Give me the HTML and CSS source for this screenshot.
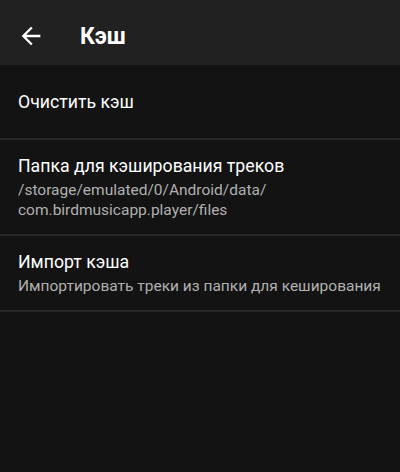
FILE: index.html
```html
<!DOCTYPE html>
<html lang="ru">

<head>
    <meta charset="UTF-8">
    <meta name="viewport" content="width=device-width, initial-scale=1.0">
    <title>Кэш</title>
    <link rel="stylesheet" href="styles.css">
</head>

<body>
    <div class="toolbar">
        <svg class="back-icon" width="28" height="28" viewBox="0 0 24 24">
            <path d="M20 11H7.83l5.59-5.59L12 4l-8 8 8 8 1.41-1.41L7.83 13H20v-2z" fill="#fff"/>
        </svg>
        <h1>Кэш</h1>
    </div>

    <div class="pref-list">
        <div class="pref-item">
            <div class="pref-title">Очистить кэш</div>
        </div>
        <div class="pref-item">
            <div class="pref-title">Папка для кэширования треков</div>
            <div class="pref-summary">/storage/emulated/0/Android/data/<br>com.birdmusicapp.player/files</div>
        </div>
        <div class="pref-item">
            <div class="pref-title">Импорт кэша</div>
            <div class="pref-summary">Импортировать треки из папки для кеширования</div>
        </div>
    </div>
</body>

</html>
```

FILE: styles.css
```css
html,
body {
    height: 100%;
}

body {
    margin: 0;
    font-family: 'Roboto', 'Noto Sans', sans-serif;
    background: #131313;
    color: #fff;
}

.toolbar {
    display: flex;
    align-items: center;
    height: 65px;
    padding: 7px 17px 0;
    box-sizing: border-box;
    background: #212121;
}

.back-icon {
    flex-shrink: 0;
}

.toolbar h1 {
    margin: 0 0 0 35px;
    font-size: 23px;
    font-weight: bold;
}

.pref-item {
    display: flex;
    flex-direction: column;
    justify-content: center;
    min-height: 75px;
    padding: 14px 18px;
    border-bottom: 2px solid #282828;
    box-sizing: border-box;
}

.pref-title {
    font-size: 17.7px;
    line-height: 24px;
}

.pref-summary {
    margin-top: 2px;
    font-size: 15.5px;
    line-height: 20px;
    color: #b0b0b0;
}
```
